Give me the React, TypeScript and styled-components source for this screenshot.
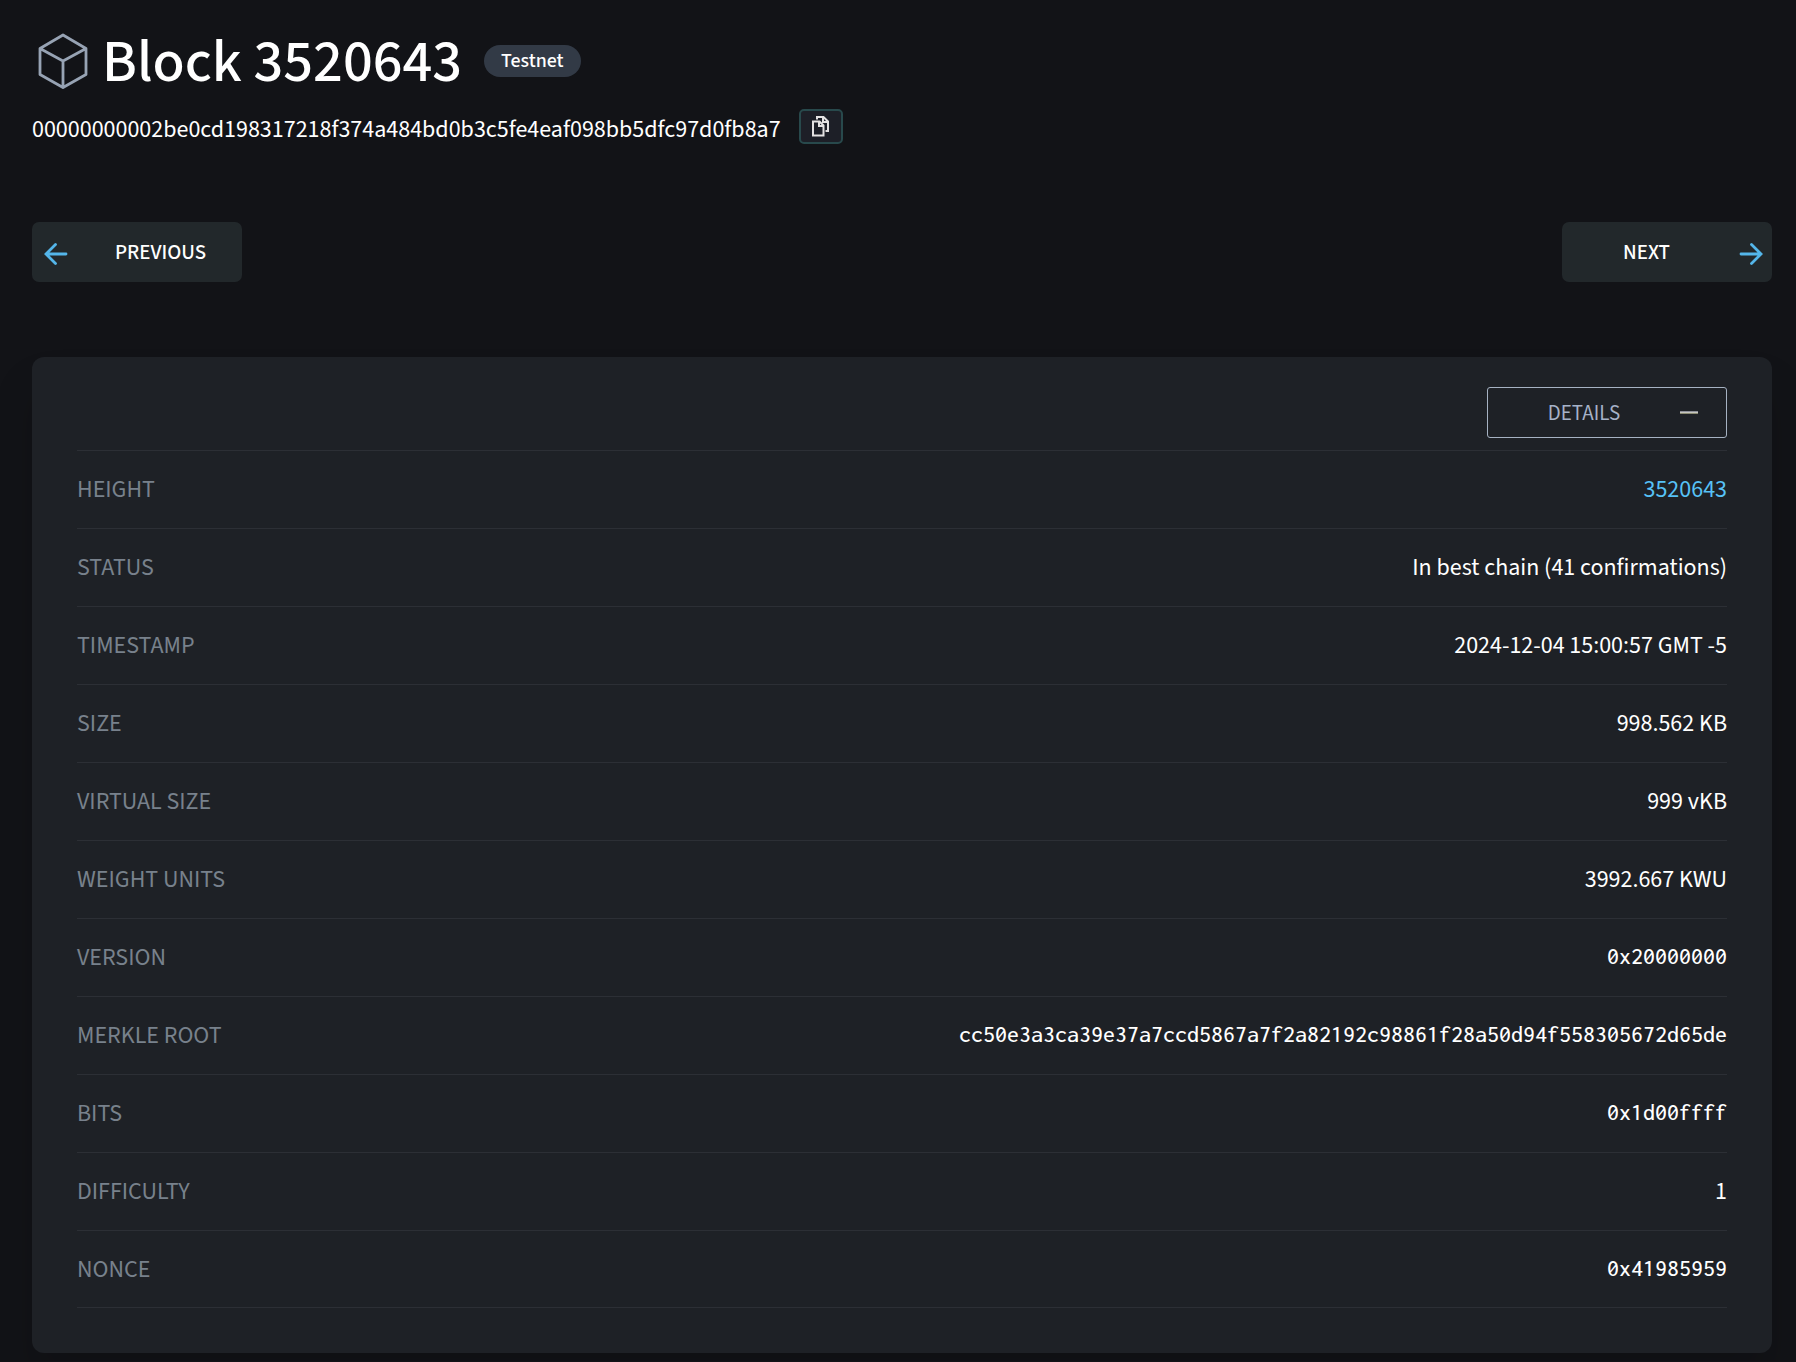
import React, { useState } from "react";
import styled, { createGlobalStyle } from "styled-components";

const sans = `"Source Sans 3", "Source Sans Pro", "Noto Sans CJK SC", "Noto Sans", sans-serif`;
const mono = `Inconsolata, "Noto Sans Mono CJK SC", "DejaVu Sans Mono", monospace`;

const GlobalStyle = createGlobalStyle`
  *, *::before, *::after { box-sizing: border-box; }
  body {
    margin: 0;
    background: #121317;
    color: #fff;
    font-family: ${sans};
    font-size: 24px;
    font-weight: 400;
    line-height: 34px;
  }
`;

const Page = styled.main`
  padding: 24px 24px 8px 32px;
`;

const TitleRow = styled.div`
  display: flex;
  align-items: center;
  height: 74px;
`;

const CubeIcon = styled.svg`
  width: 60px;
  height: 60px;
  margin-right: 10px;
  flex: none;
`;

const Title = styled.h1`
  margin: 0 22px 0 0;
  padding-top: 4px;
  font-size: 59px;
  line-height: 74px;
  font-weight: 500;
`;

const Badge = styled.span`
  height: 32px;
  padding: 0 17px;
  border-radius: 16px;
  background: #323a46;
  font-size: 20px;
  font-weight: 500;
  line-height: 32px;
`;

const HashRow = styled.div`
  display: flex;
  align-items: center;
  gap: 18px;
  margin-top: 9px;
  height: 38px;
`;

const Hash = styled.span`
  padding-top: 8px;
`;

const CopyButton = styled.button`
  display: flex;
  align-items: center;
  justify-content: center;
  width: 44px;
  height: 35px;
  padding: 0;
  border: 2px solid #28494c;
  border-radius: 5px;
  background: #1d1f27;
  color: #e4e2e2;
  cursor: pointer;
`;

const Pager = styled.nav`
  display: flex;
  justify-content: space-between;
  margin-top: 77px;
`;

const PagerLink = styled.a`
  display: flex;
  align-items: center;
  gap: 20px;
  width: 210px;
  height: 60px;
  padding: 0 9px 0 12px;
  border-radius: 7px;
  background: #22282b;
  color: #fff;
  font-size: 21px;
  font-weight: 500;
  text-decoration: none;

  svg {
    flex: none;
    width: 24px;
    height: 24px;
    margin-top: 3px;
  }
`;

const PagerText = styled.span`
  flex: 1;
  text-align: center;
`;

const Card = styled.section`
  margin-top: 75px;
  padding: 30px 45px 45px;
  border-radius: 12px;
  background: #1e2126;
  box-shadow: 0 30px 40px rgba(0, 0, 0, 0.15);
`;

const CardHeader = styled.header`
  display: flex;
  justify-content: flex-end;
  padding-bottom: 12px;
`;

const DetailsButton = styled.button`
  display: flex;
  align-items: center;
  gap: 28px;
  width: 240px;
  height: 51px;
  padding: 0 28px;
  border: 1px solid #a6b2c2;
  border-radius: 3px;
  background: transparent;
  color: #a6b2c8;
  font-family: ${sans};
  font-size: 21px;
  line-height: 28px;
  cursor: pointer;
`;

const DetailsText = styled.span`
  flex: 1;
  text-align: center;
`;

const ToggleIcon = styled.svg`
  flex: none;
  width: 18px;
  height: 18px;
`;

const List = styled.dl`
  margin: 0;
`;

const Row = styled.div`
  display: flex;
  align-items: flex-start;
  justify-content: space-between;
  height: 78px;
  padding-top: 22px;
  border-top: 1px solid #2c2f35;

  &:last-child {
    border-bottom: 1px solid #2c2f35;
  }
`;

const Label = styled.dt`
  color: #78818c;
  text-transform: uppercase;
`;

const Value = styled.dd<{ $mono?: boolean }>`
  margin: 0;
  font-family: ${(p) => (p.$mono ? mono : sans)};
  font-weight: ${(p) => (p.$mono ? 500 : 400)};
  line-height: ${(p) => (p.$mono ? 30 : 34)}px;
`;

const BlockLink = styled.a`
  color: #57c2f7;
  text-decoration: none;
`;

type Field = { label: string; value: string; mono?: boolean; link?: boolean };

const fields: Field[] = [
  { label: "Height", value: "3520643", link: true },
  { label: "Status", value: "In best chain (41 confirmations)" },
  { label: "Timestamp", value: "2024-12-04 15:00:57 GMT -5" },
  { label: "Size", value: "998.562 KB" },
  { label: "Virtual size", value: "999 vKB" },
  { label: "Weight units", value: "3992.667 KWU" },
  { label: "Version", value: "0x20000000", mono: true },
  {
    label: "Merkle root",
    value: "cc50e3a3ca39e37a7ccd5867a7f2a82192c98861f28a50d94f558305672d65de",
    mono: true,
  },
  { label: "Bits", value: "0x1d00ffff", mono: true },
  { label: "Difficulty", value: "1" },
  { label: "Nonce", value: "0x41985959", mono: true },
];

const hash = "00000000002be0cd198317218f374a484bd0b3c5fe4eaf098bb5dfc97d0fb8a7";

function Arrow({ back }: { back?: boolean }) {
  return (
    <svg viewBox="0 0 24 24" fill="none" stroke="#54b6ea" strokeWidth="2.8" strokeLinecap="round" aria-hidden="true">
      <path d={back ? "M22 12H2.5M11.5 2.5L2 12l9.5 9.5" : "M2 12h19.5M12.5 2.5L22 12l-9.5 9.5"} />
    </svg>
  );
}

export default function App() {
  const [open, setOpen] = useState(true);

  return (
    <>
      <GlobalStyle />
      <Page>
        <TitleRow>
          <CubeIcon viewBox="0 0 60 60" fill="none" stroke="#97a3b4" strokeWidth="2.8" strokeLinejoin="round" aria-hidden="true">
            <path d="M31 4L54 17.500V43.500L31 56.500L8 43.500V17.500zM8 17.500l23 12.500 23-12.500M31 30v26.500" />
          </CubeIcon>
          <Title>Block 3520643</Title>
          <Badge>Testnet</Badge>
        </TitleRow>
        <HashRow>
          <Hash>{hash}</Hash>
          <CopyButton type="button" aria-label="Copy block hash">
            <svg width="20" height="22" viewBox="0 0 20 22" fill="none" stroke="currentColor" strokeWidth="2" aria-hidden="true">
              <path d="M2 6.500h6.500l4 4v10H2zM8 6.500V11h4.500" />
              <path d="M6 4.500V2h6.500L17 6.500V16h-2.500M12 2v5h5" />
            </svg>
          </CopyButton>
        </HashRow>
        <Pager aria-label="Blocks">
          <PagerLink href="#previous">
            <Arrow back />
            <PagerText>PREVIOUS</PagerText>
          </PagerLink>
          <PagerLink href="#next">
            <PagerText>NEXT</PagerText>
            <Arrow />
          </PagerLink>
        </Pager>
        <Card>
          <CardHeader>
            <DetailsButton type="button" aria-expanded={open} onClick={() => setOpen(!open)}>
              <DetailsText>DETAILS</DetailsText>
              <ToggleIcon viewBox="0 0 18 18" aria-hidden="true">
                <path d="M0 7h18v1H0z" fill="#8d8f98" />
                <path d="M0 8h18v1H0z" fill="#c6c6c0" />
                <path d="M0 9h18v1H0z" fill="#8a8a72" />
                {!open && <path d="M8 0h2v17H8z" fill="#c6c6c0" />}
              </ToggleIcon>
            </DetailsButton>
          </CardHeader>
          {open && (
            <List>
              {fields.map((f) => (
                <Row key={f.label}>
                  <Label>{f.label}</Label>
                  <Value $mono={f.mono}>
                    {f.link ? <BlockLink href={`#${f.value}`}>{f.value}</BlockLink> : f.value}
                  </Value>
                </Row>
              ))}
            </List>
          )}
        </Card>
      </Page>
    </>
  );
}
